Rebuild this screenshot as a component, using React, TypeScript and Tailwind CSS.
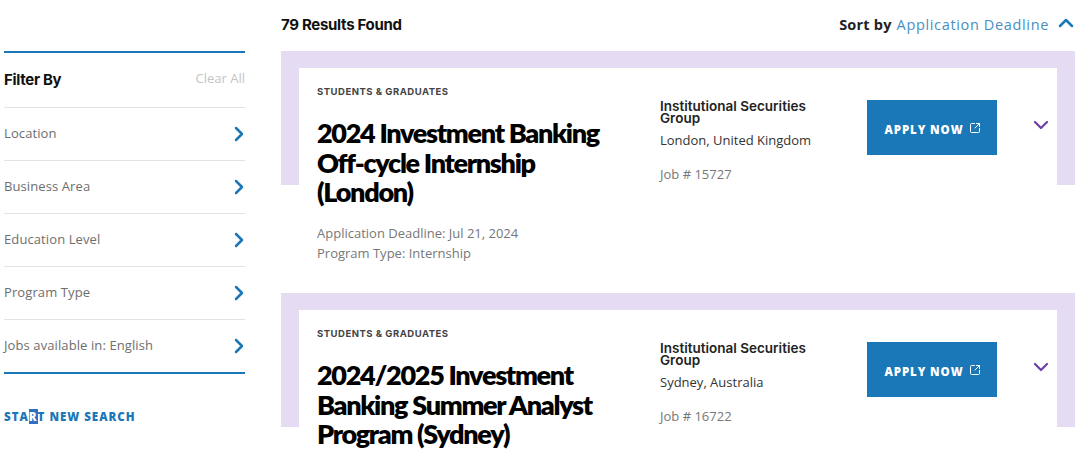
import React from 'react';
import { ChevronDown, ChevronRight, ChevronUp, SquareArrowOutUpRight } from 'lucide-react';

const FILTERS = ['Location', 'Business Area', 'Education Level', 'Program Type', 'Jobs available in: English'];

type Job = {
  title: string[];
  place: string;
  job: string;
  deadline?: string;
  type?: string;
};

const JOBS: Job[] = [
  {
    title: ['2024 Investment Banking', 'Off-cycle Internship', '(London)'],
    place: 'London, United Kingdom',
    job: 'Job # 15727',
    deadline: 'Application Deadline: Jul 21, 2024',
    type: 'Program Type: Internship',
  },
  {
    title: ['2024/2025 Investment', 'Banking Summer Analyst', 'Program (Sydney)'],
    place: 'Sydney, Australia',
    job: 'Job # 16722',
  },
];

const Sidebar = () => (
  <aside className="ml-[4px] w-[241px] shrink-0 pt-[51px] font-['Open_Sans',sans-serif]">
    <div className="border-t-2 border-[#1a77b8]">
      <div className="flex h-[54px] items-start justify-between">
        <h2 className="mt-[17px] text-[15px] leading-5 font-bold text-[#111] font-['Inter',sans-serif] tracking-[-0.3px]">Filter By</h2>
        <button className="mt-[15px] text-[13px] leading-5 text-[#c4c4c4]">Clear All</button>
      </div>
      {FILTERS.map(name => (
        <div key={name} className="flex h-[53px] items-center justify-between border-t border-[#e3e3e3]">
          <span className="text-[13px] tracking-[0.1px] text-[#6e6e6e]">{name}</span>
          <ChevronRight size={24} strokeWidth={2.5} className="-mr-[6px] text-[#1a77b8]" />
        </div>
      ))}
    </div>
    <div className="border-t-2 border-[#1a77b8] pt-[29px]">
      <a className="text-[11.5px] leading-5 font-extrabold tracking-[1px] text-[#1a77b8]">
        STA<span className="bg-[#2f6fc4] text-white">R</span>T NEW SEARCH
      </a>
    </div>
  </aside>
);

const JobCard = ({ job }: { job: Job }) => (
  <article className="relative h-[242px] px-[18px] pt-[17px]">
    <div className="absolute inset-x-0 top-0 h-[134px] bg-[#e5dcf4]"></div>
    <div className="relative flex h-[225px] bg-white pl-[18px] pt-[16px]">
      <div className="w-[343px] shrink-0">
        <p className="mt-[1px] text-[9.5px] leading-[14px] font-bold tracking-[0.5px] text-[#444] font-['Inter',sans-serif]">STUDENTS &amp; GRADUATES</p>
        <h3 className="mt-[19px] text-[27px] leading-[29.5px] font-extrabold tracking-[-1.3px] text-black font-['Lato',sans-serif]">
          {job.title.map(line => <span key={line} className="block whitespace-nowrap">{line}</span>)}
        </h3>
        {job.deadline && (
          <div className="mt-[16px] text-[13px] leading-5 text-[#777]">
            <p>{job.deadline}</p>
            <p>{job.type}</p>
          </div>
        )}
      </div>
      <div className="w-[207px] shrink-0 pt-[16px]">
        <p className="w-[170px] text-[13.5px] leading-[12px] font-semibold text-[#222] font-['Inter',sans-serif]">Institutional Securities Group</p>
        <p className="mt-[6px] text-[13px] leading-5 text-[#333]">{job.place}</p>
        <p className="mt-[14px] text-[13px] leading-5 text-[#777]">{job.job}</p>
      </div>
      <div className="mt-[16px] flex h-[55px] w-[130px] shrink-0 items-center justify-center gap-[5px] bg-[#1a77b8] pl-[1px] text-white">
        <span className="mt-[4px] text-[11.5px] font-extrabold tracking-[0.9px] font-['Open_Sans',sans-serif]">APPLY NOW</span>
        <SquareArrowOutUpRight size={12} strokeWidth={2} />
      </div>
      <ChevronDown size={24} strokeWidth={2.2} className="ml-[32px] mt-[29px] text-[#6b3fa8]" />
    </div>
  </article>
);

export default function App() {
  return (
    <div className="flex h-[455px] w-[1080px] overflow-hidden bg-white font-['Open_Sans',sans-serif]">
      <Sidebar />
      <main className="ml-[36px] w-[794px] shrink-0">
        <header className="flex h-[51px] items-start justify-between">
          <h1 className="mt-[15px] text-[15px] leading-5 font-bold text-[#111] font-['Inter',sans-serif] tracking-[-0.3px]">79 Results Found</h1>
          <div className="-mr-[3px] mt-[14px] flex items-center text-[14.5px] leading-5">
            <span className="font-bold text-[#222] tracking-[0.2px]">Sort by</span>
            <span className="ml-[5px] tracking-[0.65px] text-[#4a8fc4]">Application Deadline</span>
            <ChevronUp size={24} strokeWidth={2.5} className="ml-[5px] -mt-[3px] text-[#1a77b8]" />
          </div>
        </header>
        {JOBS.map(job => <JobCard key={job.job} job={job} />)}
      </main>
    </div>
  );
}
